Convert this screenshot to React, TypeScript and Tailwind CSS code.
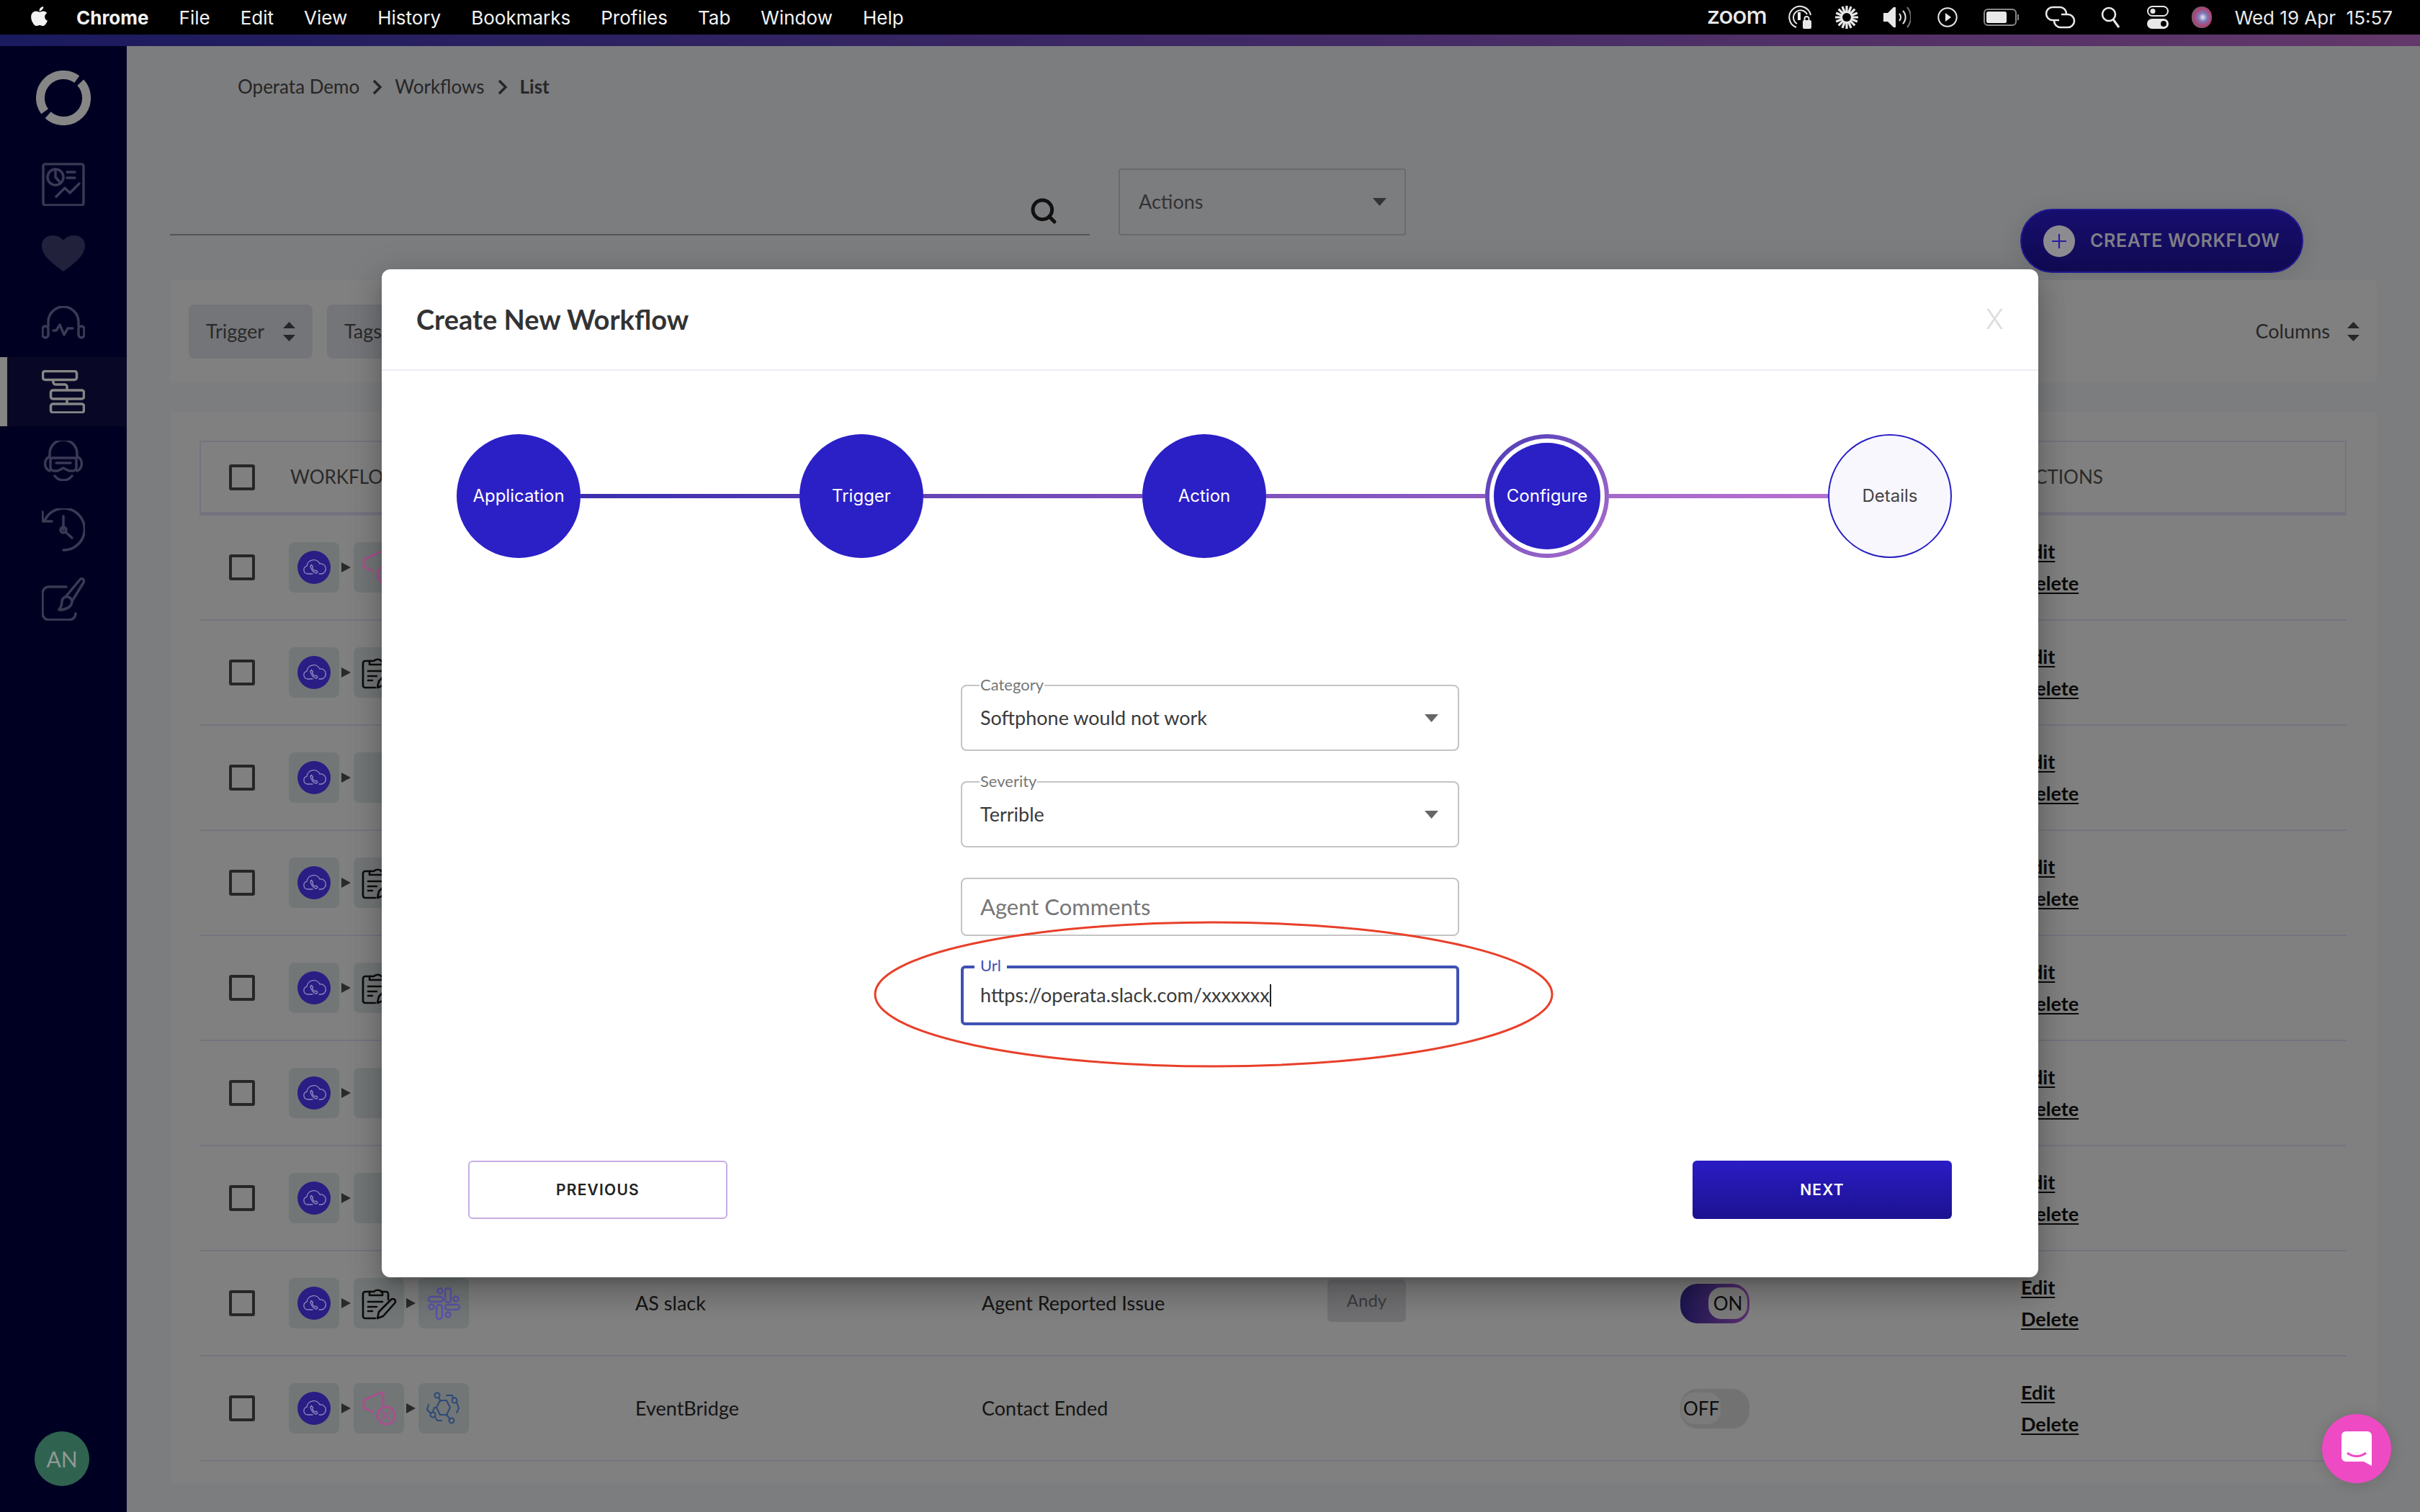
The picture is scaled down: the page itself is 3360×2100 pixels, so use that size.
import React from "react";
import { FaApple } from "react-icons/fa";
import { Search } from "lucide-react";

const Tri = ({ className }: { className: string }) => (
  <svg width="19" height="11" viewBox="0 0 19 11" className={className}><path d="M0 0h19L9.5 11z" fill="currentColor" /></svg>
);

const UpDown = () => (
  <svg width="17" height="27" viewBox="0 0 17 27" className="shrink-0"><path d="M8.5 0L17 9H0zM0 18h17l-8.5 9z" fill="#262626" /></svg>
);

const Chevron = () => (
  <svg width="17" height="24" viewBox="0 0 17 24" className="shrink-0"><path d="M4 3l9 9-9 9" fill="none" stroke="#262626" strokeWidth="3.4" /></svg>
);

const MenuIcons = () => (
  <div className="flex items-center text-[#e8e8e8]">
    <span className="text-[33px] leading-none font-medium tracking-[-1px] font-['Inter',sans-serif] w-[81px] mb-[6px]">zoom</span>
    <svg width="34" height="34" viewBox="0 0 34 34" className="ml-[31px]" fill="none" stroke="currentColor" strokeWidth="2"><path d="M12 31A15 15 0 1 1 32 14" /><path d="M13 26A10 10 0 1 1 27 13" /><path d="M16 10v11" strokeWidth="4" /><rect x="21" y="21" width="12" height="12" rx="2" fill="currentColor" stroke="none" /><path d="M23.5 22v-3a3 3 0 0 1 6 0v3" /></svg>
    <svg width="32" height="32" viewBox="0 0 32 32" className="ml-[32px]" stroke="currentColor" strokeWidth="3.2" strokeLinecap="butt"><path d="M16 0v32M0 16h32M4.700 4.700l22.600 22.600M27.300 4.700L4.700 27.300M9.900 1.200l12.200 29.600M22.100 1.200L9.900 30.800M1.200 9.900l29.600 12.200M30.800 9.900L1.200 22.100" /><circle cx="16" cy="16" r="6" fill="#000" stroke="none" /></svg>
    <svg width="38" height="32" viewBox="0 0 38 32" className="ml-[35px]" fill="none"><path d="M0 10h6l8-8h3v28h-3l-8-8H0z" fill="currentColor" /><path d="M22 11a7 7 0 0 1 0 10M27 7a13 13 0 0 1 0 18" stroke="currentColor" strokeWidth="2" /><path d="M33 2a22 22 0 0 1 0 28" stroke="#777" strokeWidth="2" /></svg>
    <svg width="28" height="28" viewBox="0 0 28 28" className="ml-[37px]" fill="none"><circle cx="14" cy="14" r="12.700" stroke="currentColor" strokeWidth="2" /><path d="M11 8l8 6-8 6z" fill="currentColor" /></svg>
    <svg width="50" height="24" viewBox="0 0 50 24" className="ml-[36px]" fill="none"><rect x="1" y="1" width="44" height="22" rx="5" stroke="#888" strokeWidth="2" /><rect x="4" y="4" width="28" height="16" rx="2.500" fill="currentColor" /><path d="M48 8v8" stroke="#888" strokeWidth="2" /></svg>
    <svg width="43" height="32" viewBox="0 0 43 32" className="ml-[35px]" fill="none" stroke="currentColor" strokeWidth="2.600"><path d="M20 20h-9a9 9 0 0 1 0-18h10a9 9 0 0 1 9 9" /><path d="M23 12h9a9 9 0 0 1 0 18H22a9 9 0 0 1-9-9" /></svg>
    <svg width="26" height="30" viewBox="0 0 26 30" className="ml-[35px]" fill="none" stroke="currentColor" strokeWidth="2.600"><circle cx="11" cy="11" r="9" /><path d="M17 18l8 11" strokeWidth="3" /></svg>
    <svg width="30" height="32" viewBox="0 0 30 32" className="ml-[38px]"><rect x="1" y="1" width="28" height="13" rx="6.500" fill="none" stroke="currentColor" strokeWidth="2" /><circle cx="8" cy="7.500" r="3.500" fill="currentColor" /><rect y="18" width="30" height="14" rx="7" fill="currentColor" /><circle cx="23" cy="25" r="4" fill="#000" /></svg>
    <div className="ml-[32px] w-[28px] h-[30px] rounded-full bg-[radial-gradient(circle_at_55%_50%,#e8e8f0_0%,#7a7ab8_28%,#b0406e_58%,#2f8a80_85%)]" />
    <span className="ml-[32px] text-[26px] font-normal">Wed 19 Apr&nbsp;&nbsp;15:57</span>
  </div>
);

const MenuBar = () => (
  <div className="h-[48px] bg-black flex items-center text-[#f2f2f2] text-[26px] font-['Inter',sans-serif] shrink-0 pl-[39px] pr-[38px]">
    <FaApple size={31} className="mb-[4px]" />
    <span className="ml-[36px] font-bold">Chrome</span>
    <div className="flex gap-[42px] ml-[42px]">
      {["File", "Edit", "View", "History", "Bookmarks", "Profiles", "Tab", "Window", "Help"].map((m) => (
        <span key={m}>{m}</span>
      ))}
    </div>
    <div className="ml-auto"><MenuIcons /></div>
  </div>
);

const DIM = "#3a3a55";
const sideIcons: React.ReactNode[] = [
  <svg width="60" height="60" viewBox="0 0 60 60" fill="none" stroke={DIM} strokeWidth="3.500" strokeLinecap="round" strokeLinejoin="round"><rect x="2" y="2" width="56" height="60" rx="3" transform="scale(1 .95)" /><circle cx="19" cy="20" r="11" /><path d="M19 9v11l7 8M35 13h11M35 21h11M20 47l12-12 7 7 13-13" /></svg>,
  <svg width="60" height="50" viewBox="0 0 60 50"><path d="M30 50C14 38 0 28 0 14 0 5 7 0 15 0c7 0 12 3 15 7 3-4 8-7 15-7 8 0 15 5 15 14 0 14-14 24-30 36z" fill="#21213b" /></svg>,
  <svg width="60" height="46" viewBox="0 0 60 46" fill="none" stroke={DIM} strokeWidth="3.500" strokeLinecap="round" strokeLinejoin="round"><path d="M9 28v-6a21 21 0 0 1 42 0v6" /><rect x="1" y="28" width="8" height="16" rx="4" /><rect x="51" y="28" width="8" height="16" rx="4" /><path d="M16 34h4l5-8 6 14 5-9h7" /></svg>,
  <svg width="60" height="60" viewBox="0 0 60 60" fill="none" stroke="#868686" strokeWidth="3.500" strokeLinejoin="round"><rect x="1.500" y="1.500" width="47" height="12" rx="3" /><rect x="12.500" y="28" width="46" height="12" rx="3" /><rect x="12.500" y="47" width="46" height="12" rx="3" /><path d="M16 14v3a3 3 0 0 0 3 3h13a3 3 0 0 1 3 3v5M35 40v7" /></svg>,
  <svg width="60" height="56" viewBox="0 0 60 56" fill="none" stroke={DIM} strokeWidth="3.500" strokeLinecap="round" strokeLinejoin="round"><path d="M11 24v-6a19 19 0 0 1 38 0v6" /><path d="M15 24h30a3 3 0 0 1 3 3v10a5 5 0 0 1-5 5h-5l-8-4-8 4h-5a5 5 0 0 1-5-5V27a3 3 0 0 1 3-3z" /><path d="M11 22a11 11 0 0 0 0 20M49 22a11 11 0 0 1 0 20M20 31h20M18 49a15 15 0 0 0 24 0" /></svg>,
  <svg width="60" height="60" viewBox="0 0 60 60" fill="none" stroke={DIM} strokeWidth="3.500" strokeLinecap="round" strokeLinejoin="round"><path d="M4 17A29 29 0 1 1 30 58" /><path d="M1 5v13h13" /><path d="M30 11v19M33 33l9 8" /><circle cx="30" cy="30" r="4" /></svg>,
  <svg width="60" height="60" viewBox="0 0 60 60" fill="none" stroke={DIM} strokeWidth="3.500" strokeLinecap="round" strokeLinejoin="round"><path d="M34 13H10a9 9 0 0 0-9 9v28a9 9 0 0 0 9 9h28a9 9 0 0 0 9-9" /><path d="M33 27L53 3a3 3 0 0 1 5 4L42 33" /><path d="M33 27c-3 1-5 3-5 7 0 4-2 8-4 11 8 0 18-3 18-12 0-3-4-7-9-6z" /></svg>,
];

const Sidebar = () => (
  <div className="w-[176px] shrink-0 bg-[#000022] flex flex-col">
    <div className="h-[144px] flex items-center justify-center pl-[-1px]">
      <svg width="76" height="76" viewBox="0 0 76 76" fill="none" stroke="#868686" strokeWidth="12"><path d="M61.800 16.600A32 32 0 0 1 16.600 61.800" /><path d="M12.100 56.800A32 32 0 0 1 56.800 12.100" /></svg>
    </div>
    {sideIcons.map((ic, i) => (
      <div key={i} className={`h-[96px] flex items-center justify-center ${i === 3 ? "bg-[#080826] border-l-[10px] border-[#858585] pr-[10px]" : ""}`}>{ic}</div>
    ))}
    <div className="mt-auto mb-[36px] ml-[48px] w-[76px] h-[76px] rounded-full bg-[#2f6350] text-[#8f9a94] text-[30px] flex items-center justify-center">AN</div>
  </div>
);

const CloudTile = () => (
  <div className="w-[70px] h-[70px] rounded-[8px] bg-[#727676] flex items-center justify-center shrink-0">
    <div className="w-[46px] h-[46px] rounded-full bg-[#2a1d84] flex items-center justify-center">
      <svg width="46" height="46" viewBox="0 0 46 46" fill="none" stroke="#8f8abf" strokeWidth="1.300" strokeLinecap="round"><path d="M21 32h-7a5.500 5.500 0 0 1-1-10.800 9.500 9.500 0 0 1 18-3.200 6.500 6.500 0 0 1 2.500 14H30" /><path d="M18 21l1.500-1.500 2 2.500-1 1.500c.5 2 2 3.500 4 4.500l1.500-1 2 2-1.500 2c-4 0-8.500-5.500-8.500-10.500z" /></svg>
    </div>
  </div>
);

const Tile = ({ children }: { children?: React.ReactNode }) => (
  <div className="w-[70px] h-[70px] rounded-[8px] bg-[#727676] shrink-0">
    <svg width="70" height="70" viewBox="0 0 70 70" fill="none">{children}</svg>
  </div>
);

const Arrow = () => (
  <svg width="20" height="14" viewBox="0 0 20 14" className="shrink-0"><path d="M3 0l13 7-13 7z" fill="#2a2a2a" /></svg>
);

const Clipboard = () => (
  <Tile>
    <g stroke="#0c0c0c" strokeWidth="2.600" strokeLinecap="round" strokeLinejoin="round">
      <path d="M24 19h-8a3 3 0 0 0-3 3v31a3 3 0 0 0 3 3h14" />
      <path d="M48 30V22a3 3 0 0 0-3-3h-7" />
      <path d="M22 24v-5h6a7 6 0 0 1 11 0h1v5z" />
      <path d="M20 33h20M20 40h12M20 46h6" />
      <path d="M33 56l2-9 17-17a3 3 0 0 1 5 5L41 53z" />
    </g>
  </Tile>
);

const Megaphone = () => (
  <Tile>
    <g stroke="#a8508f" strokeWidth="3" strokeLinecap="round" strokeLinejoin="round">
      <path d="M26 40L14 34V24l24-11c2 0 3 1 3 3v14" />
      <circle cx="45" cy="45" r="12" />
      <path d="M40 40l10 10M50 40L40 50" strokeWidth="2.500" stroke="#9a5a8c" />
    </g>
  </Tile>
);

const Slack = () => (
  <Tile>
    <g stroke="#5a52ab" strokeWidth="2.400">
      <rect x="14" y="26" width="20" height="7" rx="3.500" />
      <rect x="37" y="14" width="8" height="20" rx="4" />
      <circle cx="30" cy="18" r="3.500" />
      <circle cx="52" cy="29" r="3.500" />
      <rect x="37" y="37" width="20" height="7" rx="3.500" />
      <rect x="25" y="37" width="8" height="20" rx="4" />
      <circle cx="41" cy="51" r="3.500" />
      <circle cx="18" cy="40" r="3.500" />
    </g>
  </Tile>
);

const Hub = () => (
  <Tile>
    <g stroke="#2c4a78" strokeWidth="2" strokeLinecap="round" strokeLinejoin="round">
      <path d="M30 24h9l5 10-5 10h-9l-5-10z" />
      <circle cx="26" cy="17" r="3.500" />
      <circle cx="50" cy="24" r="3.500" />
      <circle cx="20" cy="44" r="3.500" />
      <circle cx="46" cy="52" r="3.500" />
      <path d="M28 20l3 5M25 34h-3l-2 6M39 44l5 6M39 17h8l1 4M53 26l3 9-3 6M14 30l-2 7 5 5M23 47l3 5h6" />
    </g>
  </Tile>
);

const Toggle = ({ on }: { on: boolean }) => (
  <div className={`w-[96px] h-[55px] rounded-[24px] flex items-center px-[3px] ${on ? "justify-end bg-[linear-gradient(90deg,#1c1650,#5a2f70)]" : "bg-[#727272]"}`}>
    <div className={`w-[54px] h-[44px] rounded-[18px] bg-[#7b7b7b] text-[#0c0c0c] text-[26px] flex items-center justify-center ${on ? "" : "-ml-[1px]"}`}>{on ? "ON" : "OFF"}</div>
  </div>
);

type Row = { second: React.ReactNode; third?: React.ReactNode; name?: string; trigger?: string; tag?: string; on?: boolean };
const rows: Row[] = [
  { second: <Megaphone /> },
  { second: <Clipboard /> },
  { second: <Tile /> },
  { second: <Clipboard /> },
  { second: <Clipboard /> },
  { second: <Tile /> },
  { second: <Tile /> },
  { second: <Clipboard />, third: <Slack />, name: "AS slack", trigger: "Agent Reported Issue", tag: "Andy", on: true },
  { second: <Megaphone />, third: <Hub />, name: "EventBridge", trigger: "Contact Ended", on: false },
];

const GRID = "grid grid-cols-[124px_481px_481px_480px_490px_473px_1fr] items-center";

const TableRow = ({ r }: { r: Row }) => (
  <div className={`${GRID} h-[146px] border-b-2 border-[#747480] text-[#141414] text-[27px]`}>
    <div className="pl-[41px]"><div className="w-[36px] h-[36px] border-[4px] border-[#262626] rounded-[3px]" /></div>
    <div className="flex items-center gap-0">
      <CloudTile /><Arrow />{r.second}{r.third ? <><Arrow />{r.third}</> : null}
    </div>
    <div>{r.name}</div>
    <div>{r.trigger}</div>
    <div>{r.tag ? <span className="inline-flex items-center justify-center w-[109px] h-[59px] -mt-[8px] rounded-[6px] bg-[#707072] text-[#3c3c3c] text-[24px]">{r.tag}</span> : null}</div>
    <div>{r.on !== undefined ? <Toggle on={r.on} /> : null}</div>
    <div className="flex flex-col gap-[12px] font-bold text-[#0a0a0a] text-[27px] leading-[32px] underline underline-offset-[3px]">
      <span>Edit</span><span>Delete</span>
    </div>
  </div>
);

const FilterBtn = ({ label }: { label: string }) => (
  <div className="w-[172px] h-[75px] rounded-[8px] bg-[#747579] text-[#2a2a2a] text-[27px] flex items-center justify-between pl-[24px] pr-[24px]">
    <span>{label}</span><UpDown />
  </div>
);

const Main = () => (
  <div className="flex-1 bg-[#7c7d7f] pl-[60px] pr-[60px] flex flex-col min-w-0">
    <div className="h-[112px] pl-[94px] pt-[40px] flex items-start gap-[16px] text-[26px] leading-[32px] text-[#262626] shrink-0">
      <span>Operata Demo</span><div className="mt-[5px]"><Chevron /></div><span>Workflows</span><div className="mt-[5px]"><Chevron /></div><span className="font-bold">List</span>
    </div>
    <div className="h-[58px] shrink-0" />
    <div className="flex items-start h-[155px] shrink-0">
      <div className="w-[1277px] h-[93px] border-b-2 border-[#555] flex items-end justify-end pb-[12px] pr-[44px]">
        <Search size={40} color="#111" strokeWidth={3} />
      </div>
      <div className="ml-[40px] w-[399px] h-[93px] border-2 border-[#6a6a6a] rounded-[4px] flex items-center justify-between pl-[26px] pr-[25px] text-[27px] text-[#333]">
        <span>Actions</span><Tri className="text-[#333]" />
      </div>
      <div className="ml-auto mr-[102px] mt-[56px] w-[393px] h-[89px] rounded-full border-2 border-[#1f1890] bg-[linear-gradient(180deg,#170e6e,#100a52)] flex items-center pl-[30px] font-['Inter',sans-serif] shadow-[0_4px_30px_rgba(0,0,0,.12)]">
        <div className="w-[44px] h-[44px] rounded-full bg-[#8c8c90] flex items-center justify-center">
          <svg width="22" height="22" viewBox="0 0 22 22"><path d="M11 1v20M1 11h20" stroke="#2a1da0" strokeWidth="2.200" /></svg>
        </div>
        <span className="ml-[21px] text-[25px] font-semibold text-[#7f7f86] whitespace-nowrap tracking-[.6px]">CREATE WORKFLOW</span>
      </div>
    </div>
    <div className="h-[142px] shrink-0 rounded-[6px] bg-[#808080] flex items-center pl-[26px] pr-[24px] gap-[20px] text-[27px] text-[#262626]">
      <FilterBtn label="Trigger" /><FilterBtn label="Tags" />
      <div className="ml-auto flex items-center gap-[24px]"><span>Columns</span><UpDown /></div>
    </div>
    <div className="mt-[41px] h-[1488px] shrink-0 bg-[#808080] pt-[40px] pl-[41px] pr-[42px]">
      <div className={`${GRID} h-[104px] border-2 border-b-[5px] border-[#747480] text-[#2a2a2a] text-[26px] -ml-0`}>
        <div className="pl-[39px]"><div className="w-[36px] h-[36px] border-[4px] border-[#262626] rounded-[3px]" /></div>
        <div>WORKFLOW</div><div /><div /><div /><div />
        <div>ACTIONS</div>
      </div>
      {rows.map((r, i) => <TableRow key={i} r={r} />)}
    </div>
  </div>
);

const Circle = ({ label, done = true }: { label: string; done?: boolean }) => (
  <div className={`w-[172px] h-[172px] rounded-full flex items-center justify-center text-[24px] font-['Inter',sans-serif] shrink-0 ${done ? "bg-[#2b1fc6] text-white" : "bg-[#f8f7fd] border-2 border-[#2b1fc6] text-[#444]"}`}>{label}</div>
);

const Line = ({ cls }: { cls: string }) => <div className={`flex-1 h-[6px] ${cls}`} />;

const Field = ({ label, value, mt }: { label: string; value: string; mt: string }) => (
  <div className={`relative w-[692px] h-[92px] border-2 border-[#c4c4c4] rounded-[8px] flex items-center justify-between pl-[25px] pr-[27px] text-[27px] text-[#3a3a3a] ${mt}`}>
    <span className="absolute left-[24px] -top-[15px] bg-white px-[1px] text-[22px] leading-[26px] text-[#777]">{label}</span>
    <span>{value}</span>
    <Tri className="text-[#666]" />
  </div>
);

const Modal = () => (
  <div className="absolute left-[530px] top-[374px] w-[2300px] h-[1400px] bg-white rounded-[12px] shadow-[0_11px_15px_-7px_rgba(0,0,0,.2),0_24px_38px_3px_rgba(0,0,0,.14),0_9px_46px_8px_rgba(0,0,0,.12)] flex flex-col">
    <div className="h-[141px] border-b-2 border-[#ecebf3] flex items-center justify-between pl-[48px] pr-[48px] shrink-0">
      <span className="text-[38px] font-bold text-[#333]">Create New Workflow</span>
      <span className="text-[38px] text-[#dcdcde] font-['Inter',sans-serif] font-light">X</span>
    </div>
    <div className="mt-[88px] pl-[104px] pr-[120px] flex items-center shrink-0">
      <Circle label="Application" />
      <Line cls="bg-[linear-gradient(90deg,#3a2fae,#5038b2)]" />
      <Circle label="Trigger" />
      <Line cls="bg-[linear-gradient(90deg,#6644b5,#7a4fbb)]" />
      <Circle label="Action" />
      <Line cls="bg-[linear-gradient(90deg,#7f52bd,#8f5cc3)]" />
      <div className="w-[172px] h-[172px] rounded-full p-[6px] bg-[linear-gradient(135deg,#4a3bb6,#b06fce)] shrink-0">
        <div className="w-full h-full rounded-full bg-white p-[6px]">
          <div className="w-full h-full rounded-full bg-[#2b1fc6] text-white text-[24px] font-['Inter',sans-serif] flex items-center justify-center">Configure</div>
        </div>
      </div>
      <Line cls="bg-[linear-gradient(90deg,#a569ca,#b670d0)]" />
      <Circle label="Details" done={false} />
    </div>
    <div className="relative w-[692px] mx-auto mt-[176px] shrink-0">
      <Field label="Category" value="Softphone would not work" mt="" />
      <Field label="Severity" value="Terrible" mt="mt-[42px]" />
      <div className="mt-[42px] w-[692px] h-[81px] border-2 border-[#c4c4c4] rounded-[8px] flex items-center pl-[25px] text-[31px] text-[#777]">Agent Comments</div>
      <div className="relative mt-[41px] w-[692px] h-[83px] border-[4px] border-[#3f51b5] rounded-[6px] flex items-center pl-[23px] text-[27px] text-[#3a3a3a]">
        <span className="absolute left-[15px] -top-[17px] bg-white px-[8px] text-[22px] leading-[26px] text-[#3f51b5]">Url</span>
        <span>https://operata.slack.com/xxxxxxx</span>
        <span className="w-[2px] h-[31px] bg-[#222]" />
      </div>
      <svg width="946" height="206" viewBox="0 0 946 206" fill="none" className="absolute -left-[122px] top-[327px]">
        <ellipse cx="473" cy="103" rx="470" ry="100" stroke="#e8402a" strokeWidth="3" />
      </svg>
    </div>
    <div className="mt-[188px] pl-[120px] pr-[120px] flex justify-between shrink-0 font-['Inter',sans-serif]">
      <div className="w-[360px] h-[81px] rounded-[6px] border-2 border-[#c6aee4] flex items-center justify-center text-[21px] font-semibold tracking-[1.2px] text-[#222]">PREVIOUS</div>
      <div className="w-[360px] h-[81px] rounded-[6px] bg-[linear-gradient(180deg,#2a1cc4,#1c1290)] flex items-center justify-center text-[21px] font-semibold tracking-[1.2px] text-white">NEXT</div>
    </div>
  </div>
);

const Chat = () => (
  <div className="absolute left-[3224px] top-[1964px] w-[96px] h-[96px] rounded-full bg-[#ee4ac4] flex items-center justify-center shadow-[0_2px_20px_rgba(0,0,0,.15)]">
    <svg width="42" height="48" viewBox="0 0 42 48"><path d="M6 0h30a6 6 0 0 1 6 6v42l-11-6H6a6 6 0 0 1-6-6V6a6 6 0 0 1 6-6z" fill="#fff" /><path d="M8 30c8 6 18 6 26 0" fill="none" stroke="#ee4ac4" strokeWidth="3" /></svg>
  </div>
);

export default function App() {
  return (
    <div className="relative w-[3360px] h-[2100px] overflow-hidden flex flex-col font-['Lato',sans-serif]">
      <MenuBar />
      <div className="h-[16px] shrink-0 bg-[linear-gradient(90deg,#1a1a5e,#63386a)]" />
      <div className="flex-1 flex min-h-0">
        <Sidebar />
        <Main />
      </div>
      <Modal />
      <Chat />
    </div>
  );
}
